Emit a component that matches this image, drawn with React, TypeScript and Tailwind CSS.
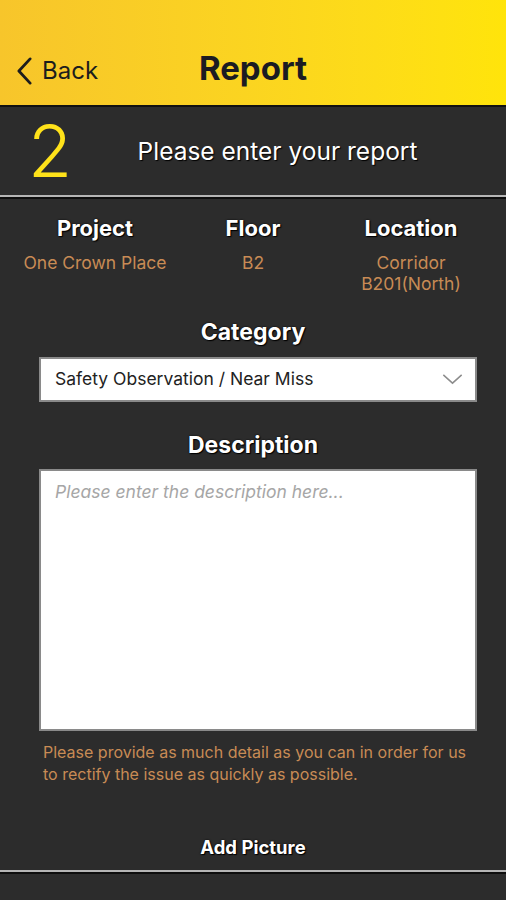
import React from "react";

const shadow = "[text-shadow:0_0_2px_#000,1px_1px_1px_#000]";

function Chevron({ className }: { className?: string }) {
  return (
    <svg viewBox="0 0 20 30" className={className} fill="none" stroke="currentColor" strokeWidth={3} strokeLinecap="round" strokeLinejoin="round">
      <path d="M16 2 L4 15 L16 28" />
    </svg>
  );
}

export default function App() {
  return (
    <div className="flex h-[900px] w-[506px] flex-col overflow-hidden bg-[#2c2c2c] font-['Inter',sans-serif]">
      <header className="relative flex h-[105px] items-end bg-gradient-to-r from-[#f7c52b] to-[#ffe40a] pb-[20px]">
        <div className="flex items-center pl-[15px] text-[#1d1d1d]">
          <Chevron className="h-[28px] w-[19px]" />
          <span className="ml-[8px] text-[24px] leading-none">Back</span>
        </div>
        <h1 className="absolute bottom-[20px] left-0 right-0 text-center text-[33px] font-bold leading-none text-[#1b1b22]">
          Report
        </h1>
      </header>
      <div className="h-[2px] bg-[#111]" />

      <div className="flex h-[88px] items-center">
        <span className="w-[104px] pl-[28px] text-[72px] font-light leading-none text-[#ffe21a]">2</span>
        <span className="flex-1 pr-[55px] text-center text-[24.5px] text-white [text-shadow:1px_1px_1px_#000]">
          Please enter your report
        </span>
      </div>
      <div className="h-[2px] bg-[#b5b5b5]" />
      <div className="h-[2px] bg-[#0d0d0d]" />

      <div className="grid grid-cols-3 px-[16px] pt-[15px] text-center">
        {[
          { label: "Project", value: ["One Crown Place"] },
          { label: "Floor", value: ["B2"] },
          { label: "Location", value: ["Corridor", "B201(North)"] },
        ].map((col) => (
          <div key={col.label}>
            <div className={`text-[22px] font-bold leading-[28px] text-white ${shadow}`}>{col.label}</div>
            <div className="mt-[10px] text-[17.5px] leading-[21px] text-[#c88b55]">
              {col.value.map((v) => (
                <div key={v}>{v}</div>
              ))}
            </div>
          </div>
        ))}
      </div>

      <div className={`mt-[23px] text-center text-[23px] font-bold leading-[30px] text-white ${shadow}`}>Category</div>
      <div className="ml-[39px] mr-[29px] mt-[10px] flex h-[45px] items-center justify-between border-2 border-[#8a8a8a] bg-white pl-[14px] pr-[12px]">
        <span className="text-[17.5px] text-[#222]">Safety Observation / Near Miss</span>
        <svg viewBox="0 0 22 12" className="h-[11px] w-[21px]" fill="none" stroke="#8c8c8c" strokeWidth={1.6}>
          <path d="M1 1 L11 10 L21 1" />
        </svg>
      </div>

      <div className={`mt-[28px] text-center text-[23px] font-bold leading-[30px] text-white ${shadow}`}>Description</div>
      <div className="ml-[39px] mr-[29px] mt-[9px] h-[262px] border-2 border-[#8a8a8a] bg-white px-[14px] pt-[8px]">
        <span className="text-[17.5px] italic text-[#a6a6a6]">Please enter the description here...</span>
      </div>

      <p className="ml-[43px] mr-[36px] mt-[10px] text-[16px] leading-[22px] text-[#c88b55]">
        Please provide as much detail as you can in order for us to rectify the issue as quickly as possible.
      </p>

      <div className={`mt-[50px] text-center text-[18.5px] font-bold leading-[24px] text-white ${shadow}`}>Add Picture</div>
      <div className="mt-[11px] h-[2px] bg-[#b5b5b5]" />
      <div className="h-[2px] bg-[#0d0d0d]" />
    </div>
  );
}
